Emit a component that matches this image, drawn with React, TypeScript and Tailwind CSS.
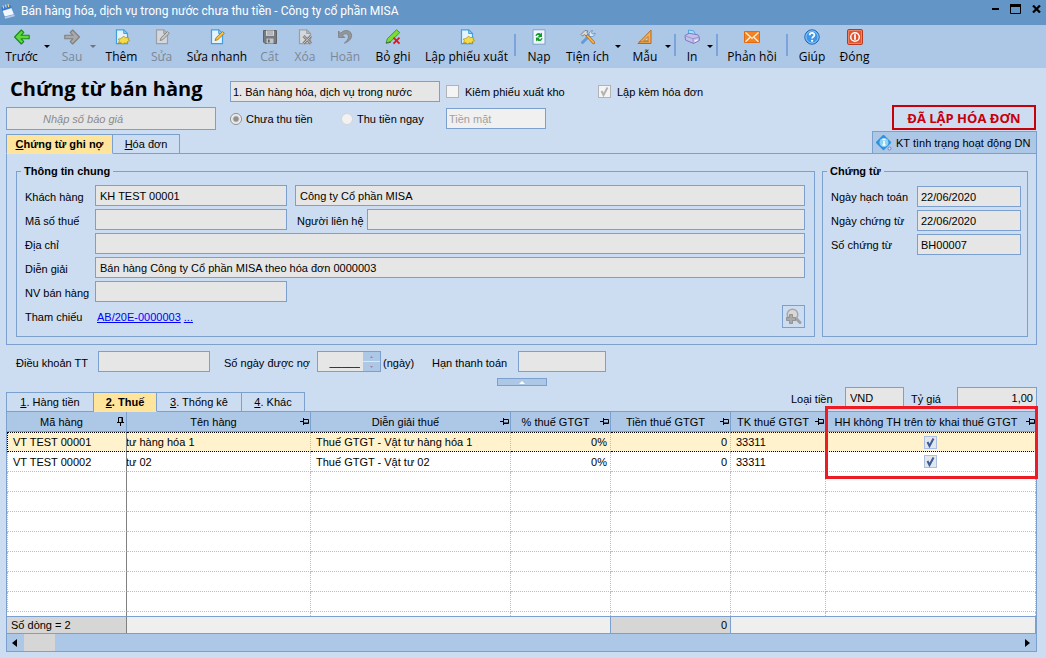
import React from 'react';
import clsx from 'clsx';

type IconName =
  | 'back' | 'forward' | 'add' | 'edit' | 'quickEdit' | 'save' | 'remove' | 'undo' | 'unpost'
  | 'reload' | 'tools' | 'ruler' | 'print' | 'mail' | 'help' | 'power';

const Page: React.FC<{ gray?: boolean; children?: React.ReactNode }> = ({ gray, children }) => (
  <>
    <path d="M2.5 .8h7.2l3.8 3.7v10.2h-11z" fill={gray ? '#d4d8dd' : '#e4f4ff'} stroke={gray ? '#9a9fa6' : '#3f9fe0'} strokeWidth="1.2" />
    <path d="M9.7 .8v3.7h3.8z" fill={gray ? '#b4b8bd' : '#8fcbf5'} stroke={gray ? '#9a9fa6' : '#3f9fe0'} />
    {children}
  </>
);

const icons: Record<IconName, React.ReactNode> = {
  back: (
    <path d="M.6 8 7.3 1l2.5 2.400-2.800 2.900h8.200v3.400H7l2.800 2.900L7.300 15z" fill="#5fd83a" stroke="#168a17" strokeWidth="1.1" strokeLinejoin="round" />
  ),
  forward: (
    <path d="M15.400 8 8.700 1 6.200 3.400 9 6.300H.8v3.400H9l-2.800 2.900L8.700 15z" fill="#a9a9a9" stroke="#7f7f7f" strokeWidth="1.1" strokeLinejoin="round" />
  ),
  add: (
    <Page>
      <path d="M9.8 7.300l1.600 1.300 3-.2-.3 2 1.600 1-2.200 1.200-.4 1.800-2.500-.4-2.100 1-1.400-1.300-2.600-.2.8-1.800-1-1.600 2.400-.5z" fill="#f2dc4c" stroke="#b99012" strokeWidth=".8" />
    </Page>
  ),
  edit: (
    <Page gray>
      <path d="M6 11.5 7 8.8l6.5-6.3 1.9 1.8-6.6 6.4z" fill="#c5c5c5" stroke="#858585" strokeWidth=".9" />
    </Page>
  ),
  quickEdit: (
    <Page>
      <path d="M6 11.5 7 8.8l6.5-6.3 1.9 1.8-6.6 6.4z" fill="#f9c33f" stroke="#b06f14" strokeWidth=".9" />
    </Page>
  ),
  save: (
    <>
      <path d="M1.5 1.5h13v13H3l-1.5-1.5z" fill="#777b80" stroke="#5f6368" />
      <path d="M4 1.5h8v5.3H4z" fill="#d5d8dc" />
      <path d="M5 3h6M5 5h6" stroke="#8f9398" />
      <path d="M4.500 9.5h7v5h-7z" fill="#c1c4c8" />
      <path d="M6 10.5h1.7v3H6z" fill="#5f6368" />
    </>
  ),
  remove: (
    <Page gray>
      <path d="m6.5 7 7.500 7.500M14 7l-7.500 7.500" stroke="#808080" strokeWidth="3" />
      <path d="m6.500 7 7.500 7.500M14 7l-7.500 7.500" stroke="#c4c4c4" />
    </Page>
  ),
  undo: (
    <path d="M1.500 2v6.500h6.300L5.700 6.300C8 3.700 11.800 4.600 11.400 8c-.2 2.500-1.900 4.200-4.100 6.200 4.200-1.500 7.300-4 7.300-7.700C14.500 1.200 7.500-.3 3.700 4.200z" fill="#939699" stroke="#7b7e82" strokeWidth=".8" />
  ),
  unpost: (
    <>
      <path d="m1 14 1.500-4.500L11.500.8l3.300 2.800-9 8.800z" fill="#7bdc36" stroke="#2f9a1c" strokeWidth=".9" />
      <path d="M1 14.200c2-.2 3.500-.7 5-1.200" stroke="#555" fill="none" />
      <path d="m8.500 8.700 6 6M14.500 8.700l-6 6" stroke="#e51616" strokeWidth="1.900" />
    </>
  ),
  reload: (
    <>
      <path d="M2 .8h12v14.400H2z" fill="#eef6ff" stroke="#7f9fc4" />
      <path d="M4.500 7c.3-3 3.500-4 5.300-2.200L11 3.500V8H6.700l1.600-1.500C7 5.500 6 6 5.500 7z" fill="#149b24" />
      <path d="M11.500 9c-.3 3-3.500 4-5.300 2.200L5 12.500V8.500h4.300L7.700 9.700c1.300 1 2.300.5 2.800-.7z" fill="#149b24" />
    </>
  ),
  tools: (
    <>
      <path d="M2.500 13.500 10 6" stroke="#5e9fd8" strokeWidth="3" strokeLinecap="round" />
      <path d="M9.300 6.500C8.500 3.800 10 1.700 12.500 1.500l-1.200 2.200 1.500 1.500 2.300-1.200c0 2.700-2.200 4.200-4.800 3.500z" fill="#dbe8f5" stroke="#5b8dbf" strokeWidth=".8" />
      <path d="m6.500 6 7 7.500" stroke="#b86d1d" strokeWidth="3.200" strokeLinecap="round" />
      <path d="m7.500 7 6 6.500" stroke="#f3bb55" strokeWidth="1.600" strokeLinecap="round" />
      <path d="M1 5.500 5 1.500l3 .5-1 1.200 1 1.600L6 7 4.500 5.500 2.500 7z" fill="#d9d9d9" stroke="#777" strokeWidth=".9" />
    </>
  ),
  ruler: (
    <>
      <path d="M14 1.200v13.300H1z" fill="#f3ae58" stroke="#b3691d" strokeLinejoin="round" />
      <path d="M11 7.500v4.300H6.800z" fill="#c5d8ef" stroke="#b3691d" strokeWidth=".8" />
      <path d="M3 13.500V12M5 13.500V12M7 13.500V12M9 13.500V12M11 13.500V12" stroke="#8a4a10" strokeWidth=".7" />
    </>
  ),
  print: (
    <>
      <path d="m4.500 1 5 .8 2.500 4.500-7.500.7z" fill="#a7dcff" stroke="#4e9fdf" strokeWidth=".9" />
      <path d="M1 6.500 5 4.300l8.800 1.500L15.300 8v3.500L9.500 14.500 1.500 11z" fill="#c3c0ec" stroke="#7672b8" strokeWidth=".9" />
      <path d="m1.500 7 7.500 2.700L15 8M9 9.700v4.300" stroke="#8d89ca" strokeWidth=".8" fill="none" />
      <path d="m10.500 11.500 3-1.300v1.500l-3 1.400z" fill="#f3f2ff" />
    </>
  ),
  mail: (
    <>
      <path d="M.5 2.500h15v11H.5z" fill="#f58220" stroke="#e06a10" />
      <path d="m1.500 3.500 6.500 6 6.500-6M1.500 12.700l4.700-4.500M14.500 12.700 9.800 8.200" fill="none" stroke="#fff3e0" strokeWidth="1.200" />
    </>
  ),
  help: (
    <>
      <circle cx="8" cy="8" r="7.200" fill="#3f96e6" stroke="#1e64b4" />
      <circle cx="8" cy="8" r="6.100" fill="none" stroke="#a5d4fb" strokeWidth=".8" />
      <path d="M5.700 6.200C5.700 3.200 10.400 3.300 10.400 6c0 1.700-2.300 1.800-2.300 3.500" stroke="#fff" strokeWidth="1.700" fill="none" />
      <circle cx="8.100" cy="11.800" r="1.100" fill="#fff" />
    </>
  ),
  power: (
    <>
      <rect x=".6" y=".6" width="14.800" height="14.800" rx="1" fill="#e2512c" stroke="#b03216" />
      <rect x="1.700" y="1.700" width="12.600" height="12.600" fill="none" stroke="#f6a184" strokeWidth=".7" />
      <circle cx="8" cy="8" r="4.300" fill="none" stroke="#fff" strokeWidth="1.500" />
      <path d="M8 5.200v5.600" stroke="#fff" strokeWidth="1.800" />
    </>
  ),
};

interface ToolItem {
  label?: string;
  icon?: IconName;
  width: string;
  disabled?: boolean;
  kind?: 'arrow' | 'sep';
}

const toolbar: ToolItem[] = [
  { label: 'Trước', icon: 'back', width: 'w-[43px]' },
  { kind: 'arrow', width: 'w-2' },
  { label: 'Sau', icon: 'forward', width: 'w-[34px] ml-1', disabled: true },
  { kind: 'arrow', width: 'w-2', disabled: true },
  { label: 'Thêm', icon: 'add', width: 'w-[49px]' },
  { label: 'Sửa', icon: 'edit', width: 'w-[31px]', disabled: true },
  { label: 'Sửa nhanh', icon: 'quickEdit', width: 'w-[80px]' },
  { label: 'Cất', icon: 'save', width: 'w-[25px]', disabled: true },
  { label: 'Xóa', icon: 'remove', width: 'w-[46px]', disabled: true },
  { label: 'Hoãn', icon: 'undo', width: 'w-[34px]', disabled: true },
  { label: 'Bỏ ghi', icon: 'unpost', width: 'w-[62px]' },
  { label: 'Lập phiếu xuất', icon: 'add', width: 'w-[85px]' },
  { kind: 'sep', width: 'w-3' },
  { label: 'Nạp', icon: 'reload', width: 'w-[36px]' },
  { label: 'Tiện ích', icon: 'tools', width: 'w-[53px] ml-1' },
  { kind: 'arrow', width: 'w-2' },
  { label: 'Mẫu', icon: 'ruler', width: 'w-[38px] ml-1' },
  { kind: 'arrow', width: 'w-2' },
  { kind: 'sep', width: 'w-1.5' },
  { label: 'In', icon: 'print', width: 'w-[28px]' },
  { kind: 'arrow', width: 'w-2' },
  { kind: 'sep', width: 'w-1.5' },
  { label: 'Phản hồi', icon: 'mail', width: 'w-[64px]' },
  { kind: 'sep', width: 'w-1.5' },
  { label: 'Giúp', icon: 'help', width: 'w-[44px]' },
  { label: 'Đóng', icon: 'power', width: 'w-[41px]' },
];

const Toolbar: React.FC = () => (
  <nav className="flex h-[43px] bg-[#adc7e7] font-['Open_Sans',sans-serif] text-[12px]">
    {toolbar.map((item, i) => {
      if (item.kind === 'sep') {
        return (
          <span key={i} className={clsx('flex shrink-0 justify-center pt-[9px]', item.width)}>
            <span className="h-[22px] w-[2px] bg-[#7ba5da]" />
          </span>
        );
      }
      if (item.kind === 'arrow') {
        return (
          <button key={i} aria-label="Mở rộng" className={clsx('flex shrink-0 items-start justify-center pt-[20px]', item.width)}>
            <svg width="6" height="3" viewBox="0 0 6 3"><path d="M0 0h6L3 3z" fill={item.disabled ? '#6c7480' : '#000'} /></svg>
          </button>
        );
      }
      return (
        <button
          key={i}
          disabled={item.disabled}
          className={clsx('flex shrink-0 flex-col items-center gap-1 whitespace-nowrap pt-1 leading-4', item.width, item.disabled ? 'text-[#7c8796]' : 'text-black')}
        >
          <svg width="16" height="16" viewBox="0 0 16 16" fill="none" className="shrink-0">{item.icon && icons[item.icon]}</svg>
          <span>{item.label}</span>
        </button>
      );
    })}
  </nav>
);

const TitleBar: React.FC = () => (
  <header className="flex h-[25px] items-center bg-[#6495c7] pl-px pr-[5px] text-white">
    <svg width="14" height="16" viewBox="0 0 14 16" className="mb-1 shrink-0">
      <path d="M0 4.500 9.500 2l4 9.500L3.500 14z" fill="#f0f7ff" stroke="#4b7fc4" strokeWidth=".7" />
      <path d="M0 4.500 9.500 2l1.200 3L1.200 8z" fill="#3579d4" />
      <path d="m2 2.500.7 3M4.500 1.700l.7 3M7 1l.7 3" stroke="#f5e0a0" />
      <path d="m3.500 14 10-2.500.3 1.700-9.500 2.500z" fill="#b7cbe8" />
    </svg>
    <h1 className="mb-[3px] ml-[6px] flex-1 whitespace-nowrap font-['Roboto',sans-serif] text-[12px]">
      Bán hàng hóa, dịch vụ trong nước chưa thu tiền - Công ty cổ phần MISA
    </h1>
    <div className="mb-2 flex items-center gap-[11px]">
      <button aria-label="Thu nhỏ">
        <svg width="7" height="10" viewBox="0 0 7 10" className="block"><path d="M0 4h7v2H0z" /></svg>
      </button>
      <button aria-label="Phóng to">
        <svg width="11" height="10" viewBox="0 0 11 10" className="block"><path d="M.5 1.500h10v8H.5z" fill="none" stroke="#000" /><path d="M0 0h11v3H0z" /></svg>
      </button>
      <button aria-label="Đóng cửa sổ">
        <svg width="9" height="8" viewBox="0 0 9 8" className="block"><path d="m1 .5 7 7M8 .5l-7 7" stroke="#000" strokeWidth="2.200" /></svg>
      </button>
    </div>
  </header>
);

const box = 'h-[21px] min-w-0 border border-[#7ba0cd] bg-[#e6e6e6] px-1 outline-none';

const Field: React.FC<{ id: string; value?: string; className?: string }> = ({ id, value = '', className }) => (
  <input id={id} readOnly value={value} className={clsx(box, className)} />
);

const Tick: React.FC<{ id?: string; label: string; checked?: boolean; tone: 'gray' | 'blue' }> = ({ id, label, checked, tone }) => (
  <span className="inline-grid">
    <input
      id={id}
      type="checkbox"
      aria-label={id ? undefined : label}
      checked={!!checked}
      readOnly
      className={clsx(
        'col-start-1 row-start-1 size-[13px] appearance-none border',
        tone === 'gray' ? 'border-[#b1b3b6] bg-[#f4f4f4]' : 'border-[#a9bfe3] bg-[#e3e6ea]',
      )}
    />
    {checked && (
      <svg width="13" height="13" viewBox="0 0 13 13" className="pointer-events-none col-start-1 row-start-1">
        <path d="m3.500 6 2 4 4-7.500" fill="none" stroke={tone === 'gray' ? '#b3b3b3' : '#3b5a96'} strokeWidth="2" />
      </svg>
    )}
  </span>
);

const Radio: React.FC<{ id: string; checked?: boolean }> = ({ id, checked }) => (
  <input
    id={id}
    type="radio"
    name="payment"
    checked={!!checked}
    readOnly
    className={clsx(
      'size-3 shrink-0 appearance-none rounded-full border bg-[#f2f2f2]',
      checked ? 'border-[#8e8f8f] bg-[radial-gradient(circle,#8f8f8f_0_2px,#c9c9c9_3px,#f2f2f2_4px)]' : 'border-[#d3d5d8]',
    )}
  />
);

const Tab: React.FC<{ mark: string; rest: string; active?: boolean; className: string }> = ({ mark, rest, active, className }) => (
  <button
    role="tab"
    aria-selected={!!active}
    className={clsx(
      'h-5 whitespace-nowrap border-b border-r border-t border-[#7ba0cd] first:border-l',
      active && 'border-b-[#ffe59c] bg-[#ffe59c] font-bold',
      className,
    )}
  >
    <u>{mark}</u>{rest}
  </button>
);

const DocHeader: React.FC = () => (
  <section className="flex h-[85px] items-start">
    <div className="flex w-[210px] shrink-0 flex-col">
      <h2 className="flex h-[39px] items-center whitespace-nowrap pl-1 pt-[3px] font-['Open_Sans',sans-serif] text-[20px] font-bold">Chứng từ bán hàng</h2>
      <input
        aria-label="Số báo giá"
        placeholder="Nhập số báo giá"
        className="h-[23px] border border-[#7ba0cd] bg-[#e6e6e6] pl-9 italic outline-none placeholder:text-[#8a8a8a]"
      />
      <div role="tablist" className="z-10 mt-1 flex">
        <Tab mark="C" rest="hứng từ ghi nợ" active className="w-[107px]" />
        <Tab mark="H" rest="óa đơn" className="w-[67px]" />
      </div>
    </div>
    <div className="ml-[14px] flex flex-col gap-[6px] pt-[13px]">
      <div className="flex items-center">
        <select aria-label="Loại bán hàng" className={clsx(box, 'w-[210px] appearance-none px-[2px]')}>
          <option>1. Bán hàng hóa, dịch vụ trong nước</option>
        </select>
        <span className="ml-[6px] flex w-[152px] items-center gap-[6px]">
          <Tick id="stock" label="Kiêm phiếu xuất kho" tone="gray" />
          <label htmlFor="stock" className="whitespace-nowrap">Kiêm phiếu xuất kho</label>
        </span>
        <span className="flex items-center gap-[6px]">
          <Tick id="invoice" label="Lập kèm hóa đơn" checked tone="gray" />
          <label htmlFor="invoice" className="whitespace-nowrap">Lập kèm hóa đơn</label>
        </span>
      </div>
      <div className="flex items-center">
        <span className="flex w-[111px] items-center gap-1">
          <Radio id="unpaid" checked />
          <label htmlFor="unpaid">Chưa thu tiền</label>
        </span>
        <span className="flex w-[105px] items-center gap-1">
          <Radio id="paid" />
          <label htmlFor="paid">Thu tiền ngay</label>
        </span>
        <select aria-label="Hình thức" disabled className="h-[21px] w-[100px] appearance-none border border-[#7ba0cd] bg-[#f0f0f0] px-[2px] text-[#a0a0a0] opacity-100">
          <option>Tiền mặt</option>
        </select>
      </div>
    </div>
    <div className="ml-auto flex flex-col items-end pt-[37px]">
      <strong className="mr-px flex h-[25px] w-[144px] items-center justify-center border-2 border-[#c8000a] font-['Open_Sans',sans-serif] text-[13px] leading-4 text-[#c8000a]">
        ĐÃ LẬP HÓA ĐƠN
      </strong>
      <button className="mt-px flex h-[23px] w-[165px] items-center gap-[4px] whitespace-nowrap border border-[#7ba0cd] bg-[#adc7e7] pl-[3px]">
        <svg width="16" height="16" viewBox="0 0 16 16" className="shrink-0">
          <path d="m7.500.5 7 7-7 7-7-7z" fill="#2d93dc" stroke="#2d93dc" strokeWidth="1.500" strokeLinejoin="round" />
          <circle cx="8" cy="7.500" r="4.500" fill="#8fd2f6" />
          <path d="M6.500 4.500h3M8 6v4M6.500 10h3" stroke="#fff" strokeWidth="1.600" />
          <circle cx="13.500" cy="13.500" r="1.500" fill="#dbe2fb" stroke="#6e7fd6" />
        </svg>
        KT tình trạng hoạt động DN
      </button>
    </div>
  </section>
);

const legend = '-ml-1 px-[3px] font-bold leading-[14px]';
const lab = 'shrink-0 whitespace-nowrap pt-[3px]';

const GeneralPanel: React.FC = () => (
  <section className="flex gap-[7px] border border-[#7ba0cd] pb-[7px] pl-[9px] pr-2 pt-[10px]">
    <fieldset className="min-w-0 flex-1 border border-[#7ba0cd] pb-2 pl-2 pr-[9px]">
      <legend className={legend}>Thông tin chung</legend>
      <div className="flex flex-col gap-[3px] pt-[7px]">
        <div className="flex">
          <label htmlFor="customer" className={clsx(lab, 'w-[70px]')}>Khách hàng</label>
          <Field id="customer" value="KH TEST 00001" className="w-[192px]" />
          <input aria-label="Tên khách hàng" readOnly value="Công ty Cổ phần MISA" className={clsx(box, 'ml-2 flex-1')} />
        </div>
        <div className="flex">
          <label htmlFor="tax" className={clsx(lab, 'w-[70px]')}>Mã số thuế</label>
          <Field id="tax" className="w-[192px]" />
          <label htmlFor="contact" className={clsx(lab, 'ml-[10px] w-[70px]')}>Người liên hệ</label>
          <Field id="contact" className="flex-1" />
        </div>
        <div className="flex">
          <label htmlFor="address" className={clsx(lab, 'w-[70px]')}>Địa chỉ</label>
          <Field id="address" className="flex-1" />
        </div>
        <div className="flex">
          <label htmlFor="note" className={clsx(lab, 'w-[70px]')}>Diễn giải</label>
          <Field id="note" value="Bán hàng Công ty Cổ phần MISA theo hóa đơn 0000003" className="flex-1" />
        </div>
        <div className="flex">
          <label htmlFor="seller" className={clsx(lab, 'w-[70px]')}>NV bán hàng</label>
          <Field id="seller" className="w-[192px]" />
        </div>
        <div className="flex">
          <span className={clsx(lab, 'w-[72px]')}>Tham chiếu</span>
          <a href="#ref" className="pt-[3px] text-[#0000ff] underline">AB/20E-0000003</a>
          <a href="#more" className="ml-[3px] pt-[3px] text-[#0000ff] underline">...</a>
          <button aria-label="Xem chi tiết" className="ml-auto flex size-[23px] items-center justify-center border border-[#7ba0cd]">
            <svg width="17" height="17" viewBox="0 0 17 17">
              <path d="m11 10.500 4 4" stroke="#a0a0a0" strokeWidth="3" strokeLinecap="round" />
              <circle cx="7.500" cy="6.500" r="5.300" fill="#d8d8d8" stroke="#a8a8a8" strokeWidth="1.500" />
              <path d="M4.500 6.500h3v3h3v3h-3v3h-3v-3h-3v-3h3z" fill="#a9a9a9" stroke="#888" strokeWidth=".8" />
            </svg>
          </button>
        </div>
      </div>
    </fieldset>
    <fieldset className="w-[206px] min-w-0 shrink-0 border border-[#7ba0cd] pl-2 pr-[6px]">
      <legend className={legend}>Chứng từ</legend>
      <div className="flex flex-col gap-[3px] pt-2">
        {[
          ['posted', 'Ngày hạch toán', '22/06/2020'],
          ['dated', 'Ngày chứng từ', '22/06/2020'],
          ['number', 'Số chứng từ', 'BH00007'],
        ].map(([id, label, value]) => (
          <div key={id} className="flex">
            <label htmlFor={id} className="w-[86px] shrink-0 whitespace-nowrap pt-[2px]">{label}</label>
            <Field id={id} value={value} className="flex-1 px-[3px]" />
          </div>
        ))}
      </div>
    </fieldset>
  </section>
);

const TermsRow: React.FC = () => (
  <section className="flex pl-[10px] pt-[6px]">
    <label htmlFor="terms" className={clsx(lab, 'w-[82px]')}>Điều khoản TT</label>
    <Field id="terms" className="w-[112px]" />
    <label htmlFor="days" className={clsx(lab, 'ml-[14px] w-[93px]')}>Số ngày được nợ</label>
    <div className="flex h-[21px] w-[64px] border border-[#7ba0cd] bg-[#e6e6e6]">
      <input id="days" readOnly value="_____" className="w-[45px] pr-[3px] text-right outline-none" />
      <div className="flex flex-1 flex-col gap-px">
        <button aria-label="Tăng" className="flex flex-1 items-center justify-center bg-[#adc7e7]">
          <svg width="3" height="2" viewBox="0 0 3 2"><path d="M1.500 0 3 2H0z" fill="#a8829c" /></svg>
        </button>
        <button aria-label="Giảm" className="flex flex-1 items-center justify-center bg-[#adc7e7]">
          <svg width="3" height="2" viewBox="0 0 3 2"><path d="M1.500 2 3 0H0z" fill="#a8829c" /></svg>
        </button>
      </div>
    </div>
    <span className={clsx(lab, 'ml-[2px] w-[49px]')}>(ngày)</span>
    <label htmlFor="due" className={clsx(lab, 'w-[86px]')}>Hạn thanh toán</label>
    <Field id="due" className="w-[88px]" />
  </section>
);

const Pin: React.FC<{ down?: boolean }> = ({ down }) => (
  <svg width="9" height="9" viewBox="0 0 9 9" className={clsx('shrink-0', down && 'rotate-270')}>
    <path d="M0 4.500h3M3.500 1v7M3.500 2.500h5v4h-5M4 6h4.500" fill="none" stroke="#000" />
  </svg>
);

const columns = [
  { title: 'Mã hàng', width: 'w-[120px]' },
  { title: 'Tên hàng', width: '' },
  { title: 'Diễn giải thuế', width: 'w-[200px]' },
  { title: '% thuế GTGT', width: 'w-[100px]' },
  { title: 'Tiền thuế GTGT', width: 'w-[120px]' },
  { title: 'TK thuế GTGT', width: 'w-[95px]' },
  { title: 'HH không TH trên tờ khai thuế GTGT', width: 'w-[210px]' },
];

const rows = [
  { code: 'VT TEST 00001', name: 'tư hàng hóa 1', note: 'Thuế GTGT - Vật tư hàng hóa 1' },
  { code: 'VT TEST 00002', name: 'tư 02', note: 'Thuế GTGT - Vật tư 02' },
];

const emptyRows = [0, 1, 2, 3, 4, 5, 6];

const cell = 'h-5 overflow-hidden whitespace-nowrap border-b border-r border-dotted border-[#bdbdbd] px-[5px] py-0 first:border-l';
const frozen = 'border-r-[#808080] [border-right-style:solid]';

const ItemGrid: React.FC = () => (
  <div className="relative border border-[#7ba0cd] bg-white">
    <table className="w-full table-fixed border-separate border-spacing-0">
      <colgroup>
        {columns.map((c) => <col key={c.title} className={c.width} />)}
      </colgroup>
      <thead>
        <tr>
          {columns.map((c, i) => (
            <th key={c.title} className="h-5 border-b border-r border-[#7ba0cd] bg-[#adc7e7] p-0 font-normal last:border-r-0">
              <div className="flex items-center pr-px">
                <span className="flex-1 whitespace-nowrap text-center">{c.title}</span>
                <Pin down={i === 0} />
              </div>
            </th>
          ))}
        </tr>
      </thead>
      <tbody>
        {rows.map((r, i) => {
          const line = i === 0 && 'bg-[#fff2cc] border-y border-y-black';
          return (
            <tr key={r.code}>
              <td className={clsx(cell, frozen, line, i === 0 && 'border-l-black')}>{r.code}</td>
              <td className={clsx(cell, line, 'pl-0')}><span className="-ml-px">{r.name}</span></td>
              <td className={clsx(cell, line)}>{r.note}</td>
              <td className={clsx(cell, line, 'pr-[3px] text-right')}>0%</td>
              <td className={clsx(cell, line, 'pr-[3px] text-right')}>0</td>
              <td className={clsx(cell, line)}>33311</td>
              <td className={clsx(cell, line, 'text-center leading-none')}>
                <span className="flex justify-center"><Tick label={columns[6].title} checked tone="blue" /></span>
              </td>
            </tr>
          );
        })}
        {emptyRows.map((n) => (
          <tr key={n}>
            {columns.map((c, i) => <td key={c.title} className={clsx(cell, i === 0 && frozen)} />)}
          </tr>
        ))}
        <tr>
          {columns.map((c, i) => (
            <td key={c.title} className={clsx('h-1 border-r border-dotted border-[#bdbdbd] p-0', i === 0 && frozen)} />
          ))}
        </tr>
      </tbody>
      <tfoot>
        <tr className="bg-[#efefef] leading-4">
          <td className="h-[18px] whitespace-nowrap border-y border-r border-y-[#7ba0cd] border-r-[#808080] bg-[#d6d6d6] p-0 pl-1">Số dòng = 2</td>
          <td colSpan={3} className="border-y border-r border-[#7ba0cd] p-0" />
          <td className="border-y border-r border-[#7ba0cd] bg-[#d6d6d6] p-0 pr-[3px] text-right">0</td>
          <td colSpan={2} className="border-y border-r border-[#7ba0cd] p-0" />
        </tr>
      </tfoot>
    </table>
    <div className="flex h-[17px] items-center bg-[#adc7e7] pl-[5px] pr-[6px]">
      <button aria-label="Cuộn trái"><svg width="5" height="8" viewBox="0 0 5 8"><path d="M5 0v8L0 4z" /></svg></button>
      <span className="ml-[7px] h-full w-[31px] bg-[#d6d6d6]" />
      <button aria-label="Cuộn phải" className="ml-auto"><svg width="5" height="8" viewBox="0 0 5 8"><path d="M0 0v8l5-4z" /></svg></button>
    </div>
    <div className="pointer-events-none absolute -right-[2px] -top-[6px] h-[73px] w-[213px] border-3 border-[#ed1c24]" />
  </div>
);

const App: React.FC = () => (
  <div className="min-h-screen bg-[#ccdcf1] font-['Liberation_Sans',Arial,sans-serif] text-[11px] leading-[18px] text-black">
    <TitleBar />
    <Toolbar />
    <main className="pb-[6px] pl-[6px] pr-[9px]">
      <DocHeader />
      <GeneralPanel />
      <TermsRow />
      <div className="flex h-[39px] items-end">
        <div role="tablist" className="z-10 -mb-px flex flex-1">
          <Tab mark="1" rest=". Hàng tiền" className="w-[88px]" />
          <Tab mark="2" rest=". Thuế" active className="w-[63px]" />
          <Tab mark="3" rest=". Thống kê" className="w-[85px]" />
          <Tab mark="4" rest=". Khác" className="w-[63px]" />
        </div>
        <button aria-label="Thu gọn" className="mb-[25px] flex h-2 w-[50px] items-center justify-center border border-[#7ba0cd] bg-[#adc7e7]">
          <svg width="6" height="3" viewBox="0 0 6 3"><path d="M3 0l3 3H0z" fill="#fff" /></svg>
        </button>
        <div className="mb-[3px] flex flex-1 justify-end">
          <label htmlFor="currency" className={clsx(lab, 'w-[54px]')}>Loại tiền</label>
          <select id="currency" className={clsx(box, 'w-[59px] appearance-none px-1')}>
            <option>VND</option>
          </select>
          <label htmlFor="rate" className={clsx(lab, 'ml-[7px] w-[46px]')}>Tỷ giá</label>
          <Field id="rate" value="1,00" className="w-[80px] pr-[3px] text-right" />
        </div>
      </div>
      <ItemGrid />
    </main>
  </div>
);

export default App;
